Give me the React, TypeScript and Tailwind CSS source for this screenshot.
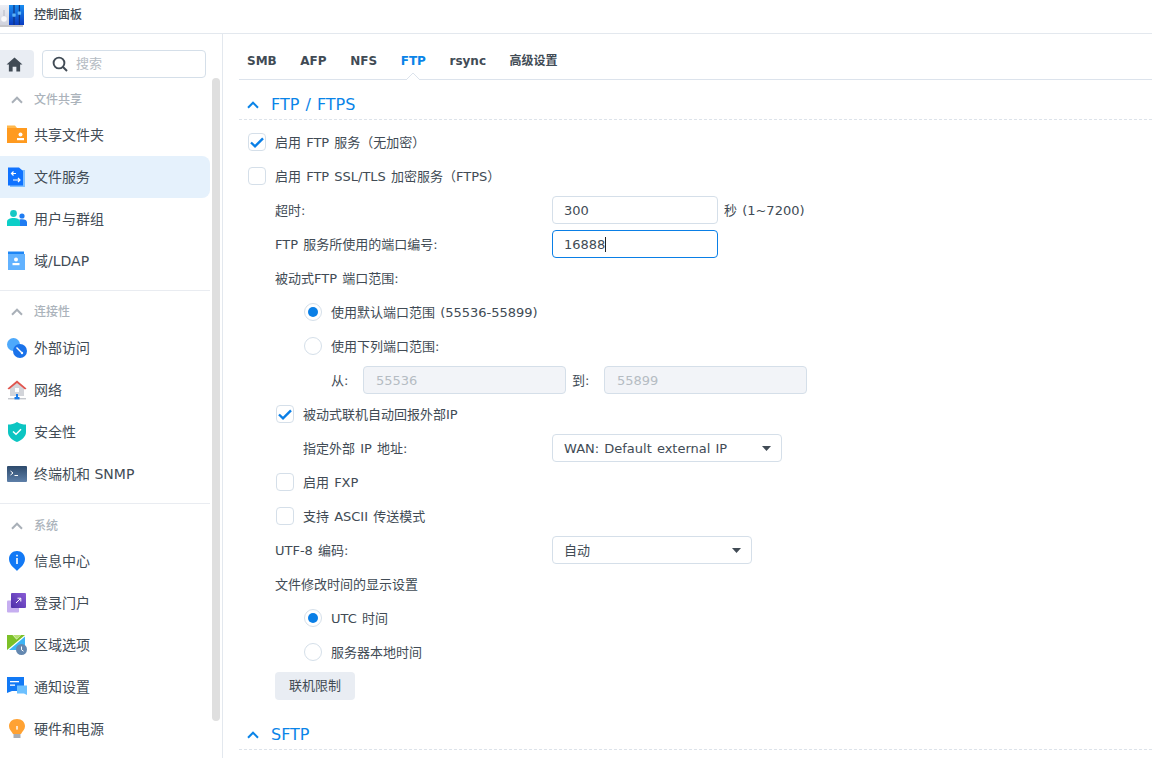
import React from "react";

const font = { fontFamily: '"DejaVu Sans","Noto Sans CJK SC",sans-serif' };

function Chevron({ className = "" }: { className?: string }) {
  return (
    <svg width="12" height="8" viewBox="0 0 12 8" fill="none" className={className}>
      <path d="M1 6.7 L6 1.7 L11 6.7" stroke="currentColor" strokeWidth="2" />
    </svg>
  );
}

function Logo() {
  return (
    <svg width="24" height="25" viewBox="0 0 24 25">
      <defs>
        <linearGradient id="lg" x1="0" y1="0" x2="0" y2="1">
          <stop offset="0" stopColor="#1a8df0" />
          <stop offset="1" stopColor="#0a3cc2" />
        </linearGradient>
        <linearGradient id="lgg" x1="0" y1="0" x2="0" y2="1">
          <stop offset="0" stopColor="#eceef4" />
          <stop offset="1" stopColor="#cfd1dc" />
        </linearGradient>
      </defs>
      <rect x="-2" y="3" width="11" height="20" fill="url(#lgg)" />
      <rect x="-2" y="23" width="25" height="2" fill="#c4c4c8" />
      <circle cx="4" cy="17" r="2.8" fill="#f8f8fa" />
      <rect x="3.5" y="8" width="1" height="6" fill="#b5b8c4" />
      <rect x="9" y="3" width="15" height="20" fill="url(#lg)" />
      <rect x="13.4" y="3" width="1.2" height="20" fill="#10337f" />
      <rect x="18.8" y="3" width="1.2" height="20" fill="#10337f" />
      <rect x="12.3" y="11.5" width="3.4" height="3.2" rx="0.6" fill="#5fb4f5" />
      <rect x="17.7" y="9.5" width="3.4" height="3.2" rx="0.6" fill="#5fb4f5" />
    </svg>
  );
}

const icons: Record<string, React.ReactNode> = {
  folder: (
    <svg width="20" height="20" viewBox="0 0 20 20">
      <path d="M0 0.5 H8 L10 3 H20 V18 H0 Z" fill="#ffb84d" />
      <path d="M0 3 H20 V18 H0 Z" fill="#ff9a1f" />
      <circle cx="13.5" cy="9.5" r="2" fill="#fff" />
      <rect x="10" y="13" width="7" height="2.2" fill="#fff" />
    </svg>
  ),
  file: (
    <svg width="20" height="20" viewBox="0 0 20 20">
      <path d="M3 3 H18 V20 H3 Z" fill="#7fc0ff" />
      <path d="M1 0.5 H12 L16 4 V18.5 H1 Z" fill="#0f72ff" />
      <path d="M9 6.5 H4.5 M6.5 4.5 L4.5 6.5 L6.5 8.5 M6 13 H13 M11 11 L13 13 L11 15" stroke="#fff" strokeWidth="1.2" fill="none" />
    </svg>
  ),
  users: (
    <svg width="20" height="20" viewBox="0 0 20 20">
      <circle cx="6.5" cy="4.5" r="3.4" fill="#18c8c4" />
      <path d="M0 17 V13 C0 10 3 9 6.5 9 C10 9 13 10 13 13 V17 Z" fill="#0ccfc8" />
      <circle cx="15" cy="7" r="2.6" fill="#1f7cf2" />
      <path d="M13 17 V13 C13 12 12.5 11 12 10.8 C13 10.3 14 10.2 15 10.2 C18 10.2 20 11.2 20 13.5 V17 Z" fill="#1f7cf2" />
    </svg>
  ),
  ldap: (
    <svg width="20" height="20" viewBox="0 0 20 20">
      <path d="M1 0.5 H17 V19 H1 Z" fill="#1e86f5" />
      <path d="M1 3 H18 V19 H1 Z" fill="#62b2ff" />
      <circle cx="9" cy="8.5" r="2" fill="#fff" />
      <rect x="5.5" y="12" width="7" height="2.2" fill="#fff" />
    </svg>
  ),
  ext: (
    <svg width="20" height="20" viewBox="0 0 20 20">
      <circle cx="6.5" cy="6.5" r="6.5" fill="#4ea9fb" />
      <circle cx="13" cy="13" r="7" fill="#1a72ea" />
      <path d="M9.5 9.5 L14.5 14.5" stroke="#fff" strokeWidth="1.4" />
      <circle cx="15" cy="15" r="1.2" fill="#fff" />
    </svg>
  ),
  net: (
    <svg width="20" height="20" viewBox="0 0 20 20">
      <path d="M3 8 H17 V16 H3 Z" fill="#d3d5da" />
      <path d="M10 2.5 L3 8.5 H17 Z" fill="#d3d5da" />
      <path d="M0.5 8.5 L10 0.5 L19.5 8.5 L18 9.5 L10 3 L2 9.5 Z" fill="#e0554e" />
      <rect x="8" y="8" width="4" height="4" fill="#fff" />
      <rect x="1" y="18" width="18" height="1.4" fill="#c5c8ce" />
      <rect x="9" y="14" width="2" height="4" fill="#1a7be8" />
      <rect x="7.5" y="17" width="5" height="2.4" fill="#1a7be8" />
    </svg>
  ),
  shield: (
    <svg width="20" height="20" viewBox="0 0 20 20">
      <path d="M10 0 C7 2 4 2.5 1 2.5 V10 C1 14.5 5 18 10 20 C15 18 19 14.5 19 10 V2.5 C16 2.5 13 2 10 0 Z" fill="#0cc5c2" />
      <path d="M6 9.5 L9 12.3 L14 7.3" stroke="#fff" strokeWidth="1.5" fill="none" />
    </svg>
  ),
  term: (
    <svg width="20" height="16" viewBox="0 0 20 16">
      <defs>
        <linearGradient id="tg" x1="0" y1="0" x2="0" y2="1">
          <stop offset="0" stopColor="#2d4a6c" />
          <stop offset="1" stopColor="#5d7fa8" />
        </linearGradient>
      </defs>
      <rect width="20" height="16" rx="1" fill="url(#tg)" />
      <path d="M3.5 5 L6 7 L3.5 9 M7.5 9.5 H11" stroke="#fff" strokeWidth="1" fill="none" />
    </svg>
  ),
  info: (
    <svg width="20" height="20" viewBox="0 0 20 20">
      <path d="M10 20 C9 18 2 14.5 2 8 C2 3.5 5.5 0 10 0 C14.5 0 18 3.5 18 8 C18 14.5 11 18 10 20 Z" fill="#1279f5" />
      <rect x="9.2" y="3.8" width="1.6" height="1.6" fill="#fff" />
      <rect x="9.2" y="7" width="1.6" height="6" fill="#fff" />
    </svg>
  ),
  portal: (
    <svg width="20" height="20" viewBox="0 0 20 20">
      <rect x="0" y="7.5" width="12" height="12" rx="1" fill="#c6aef0" />
      <defs>
        <linearGradient id="pg" x1="1" y1="0" x2="0" y2="1">
          <stop offset="0" stopColor="#8a5cd6" />
          <stop offset="1" stopColor="#4c2ea8" />
        </linearGradient>
      </defs>
      <rect x="4" y="0" width="15" height="15" rx="1" fill="url(#pg)" />
      <path d="M9 10 L13.5 5.5 M10.5 5.2 H13.8 V8.5" stroke="#fff" strokeWidth="1" fill="none" />
    </svg>
  ),
  region: (
    <svg width="20" height="20" viewBox="0 0 20 20">
      <path d="M0 0 H5.5 L9.5 4.5 L14 0 H18 L0 15 Z" fill="#7cc028" />
      <path d="M6 0 H14 L9.7 4 Z" fill="#b6e070" />
      <path d="M18 1.5 V15 H2 Z" fill="#3db4f5" />
      <circle cx="14.5" cy="14.5" r="5.5" fill="#6488b0" />
      <path d="M14.5 11.5 V14.8 L16.5 16.2" stroke="#fff" strokeWidth="1" fill="none" />
    </svg>
  ),
  notify: (
    <svg width="20" height="20" viewBox="0 0 20 20">
      <path d="M0 0 H17 V14 H5 L0 16 Z" fill="#1279f5" />
      <path d="M10 8.5 H20 V18 L17 16.5 H10 Z" fill="#6cc0ff" />
      <rect x="3" y="4" width="9" height="1.3" fill="#fff" />
      <rect x="3" y="7.5" width="5" height="1.3" fill="#fff" />
    </svg>
  ),
  bulb: (
    <svg width="20" height="20" viewBox="0 0 20 20">
      <path d="M10 0 C15 0 18 3.2 18 7.3 C18 10.5 15.5 12 14 15 H6 C4.5 12 2 10.5 2 7.3 C2 3.2 5 0 10 0 Z" fill="#ffa233" />
      <rect x="6.5" y="15" width="7" height="4" fill="#a9adb3" />
      <rect x="9.3" y="7" width="1.4" height="3.6" fill="#fff" />
    </svg>
  ),
};

function Item({ icon, label, active }: { icon: string; label: string; active?: boolean }) {
  return (
    <div className={`flex h-[42px] items-center rounded-r-lg text-[14px] text-[#414b55] ${active ? "bg-[#e5f1fc]" : ""}`}>
      <span className="ml-[7px] flex w-[27px] shrink-0 items-center">{icons[icon]}</span>
      <span>{label}</span>
    </div>
  );
}

function Group({ title }: { title: string }) {
  return (
    <div className="flex h-[30px] items-center pt-[2px] text-[12px] font-medium text-[#abb3bb]">
      <span className="ml-[11px] flex w-[23px] shrink-0 items-center text-[#a9b0b8]">
        <Chevron />
      </span>
      <span>{title}</span>
    </div>
  );
}

function Sidebar() {
  return (
    <aside className="relative flex h-full w-[223px] shrink-0 flex-col overflow-hidden border-r border-[#e3e8ee]">
      <div className="mt-4 flex items-center">
        <div className="flex h-[28px] w-[34px] items-center justify-center rounded-r-[4px] bg-[#e9edf3] pr-[6px]">
          <svg width="17" height="15" viewBox="0 0 18 16">
            <path d="M9 0.5 L17.5 8 H15 V15.5 H11 V10.5 H7 V15.5 H3 V8 H0.5 Z" fill="#414b55" />
          </svg>
        </div>
        <div className="ml-2 flex h-[28px] w-[164px] items-center rounded-[4px] border border-[#d5dfe9] text-[13px] text-[#b5bcc3]">
          <svg width="16" height="16" viewBox="0 0 16 16" fill="none" className="ml-[9px] mr-2">
            <circle cx="7" cy="7" r="5.4" stroke="#414b55" strokeWidth="1.9" />
            <path d="M11 11 L15 15" stroke="#414b55" strokeWidth="2" />
          </svg>
          搜索
        </div>
      </div>
      <div className="mt-[6px] w-[210px]">
        <Group title="文件共享" />
        <div>
          <Item icon="folder" label="共享文件夹" />
          <Item icon="file" label="文件服务" active />
          <Item icon="users" label="用户与群组" />
          <Item icon="ldap" label="域/LDAP" />
        </div>
        <div className="mt-2 border-t border-[#e9ecf1] pt-[5px]">
          <Group title="连接性" />
          <div className="pt-[1px]">
            <Item icon="ext" label="外部访问" />
            <Item icon="net" label="网络" />
            <Item icon="shield" label="安全性" />
            <Item icon="term" label="终端机和 SNMP" />
          </div>
        </div>
        <div className="mt-2 border-t border-[#e9ecf1] pt-[6px]">
          <Group title="系统" />
          <div>
            <Item icon="info" label="信息中心" />
            <Item icon="portal" label="登录门户" />
            <Item icon="region" label="区域选项" />
            <Item icon="notify" label="通知设置" />
            <Item icon="bulb" label="硬件和电源" />
          </div>
        </div>
      </div>
      <div className="absolute left-[212px] top-[44px] h-[643px] w-2 rounded bg-[#dfdfdf]" />
    </aside>
  );
}

function Tab({ label, active }: { label: string; active?: boolean }) {
  return (
    <span className={`relative flex h-full items-center pt-[8px] text-[12px] font-bold [word-spacing:0] ${active ? "text-[#0a84e8]" : "text-[#414b55]"}`}>
      {label}
      {active && (
        <svg width="14" height="7" viewBox="0 0 14 7" className="absolute -bottom-px left-1/2 -ml-[7px]">
          <path d="M0 7 L7 0 L14 7" fill="#fff" stroke="#dce3ec" />
          <rect x="1" y="6.4" width="12" height="1" fill="#fff" />
        </svg>
      )}
    </span>
  );
}

function SectionHead({ title }: { title: string }) {
  return (
    <div className="flex h-[40px] items-center border-b border-dashed border-[#dde3ea] pl-2 pt-[10px] text-[16px] text-[#0a84e8]">
      <span className="flex w-6 shrink-0 items-center">
        <Chevron />
      </span>
      <span className="pt-px">{title}</span>
    </div>
  );
}

function Row({ indent = 36, children }: { indent?: number; children: React.ReactNode }) {
  return (
    <div className="flex h-[34px] items-center" style={{ paddingLeft: indent }}>
      {children}
    </div>
  );
}

function T({ children, className = "" }: { children: React.ReactNode; className?: string }) {
  return <span className={`pt-[2px] ${className}`}>{children}</span>;
}

function Check({ checked, label, indent = 9 }: { checked?: boolean; label: string; indent?: number }) {
  return (
    <Row indent={indent}>
      <span className="mr-[9px] flex h-[18px] w-[18px] shrink-0 items-center justify-center rounded-[4px] border border-[#d5dfe9] bg-white">
        {checked && (
          <svg width="14" height="11" viewBox="0 0 14 11" fill="none">
            <path d="M1 5.5 L5 9.3 L13 1.3" stroke="#0a7fe6" strokeWidth="2.4" />
          </svg>
        )}
      </span>
      <T>{label}</T>
    </Row>
  );
}

function Radio({ checked, label }: { checked?: boolean; label: string }) {
  return (
    <Row indent={65}>
      <span className="mr-[9px] flex h-[18px] w-[18px] shrink-0 items-center justify-center rounded-full border border-[#d5dfe9] bg-white">
        {checked && <span className="h-[10px] w-[10px] rounded-full bg-[#0a7fe6]" />}
      </span>
      <T>{label}</T>
    </Row>
  );
}

function Label({ width, children }: { width: number; children: React.ReactNode }) {
  return (
    <span className="shrink-0 pt-[2px]" style={{ width }}>
      {children}
    </span>
  );
}

function Field({ value }: { value: string }) {
  return (
    <div className="flex h-[28px] w-[166px] items-center rounded-[4px] border border-[#d5dfe9] pl-[11px]">
      <T>{value}</T>
    </div>
  );
}

function Select({ value, width }: { value: string; width: string }) {
  return (
    <div className={`flex h-[28px] items-center justify-between rounded-[4px] border border-[#d5dfe9] pl-[11px] pr-[10px] ${width}`}>
      <T>{value}</T>
      <svg width="9" height="5" viewBox="0 0 9 5">
        <path d="M0 0 H9 L4.5 5 Z" fill="#414b55" />
      </svg>
    </div>
  );
}

function Disabled({ value, width }: { value: string; width: string }) {
  return (
    <div className={`flex h-[28px] items-center rounded-[4px] border border-[#d5dfe9] bg-[#f2f4f8] pl-[12px] text-[#b5bcc3] ${width}`}>
      <T>{value}</T>
    </div>
  );
}

export default function App() {
  return (
    <div className="flex h-[758px] w-[1152px] flex-col overflow-hidden bg-white" style={font}>
      <header className="flex h-[34px] shrink-0 items-center border-b border-[#e3e8ee] pb-[4px]">
        <Logo />
        <span className="ml-[10px] text-[12px] font-medium text-[#414b55]">控制面板</span>
      </header>
      <div className="flex min-h-0 flex-1">
        <Sidebar />
        <main className="min-w-0 flex-1 pl-4 text-[13px] text-[#414b55] [word-spacing:1px]">
          <nav className="flex h-[46px] items-center gap-[23.6px] border-b border-[#dce3ec] pl-2">
            <Tab label="SMB" />
            <Tab label="AFP" />
            <Tab label="NFS" />
            <Tab label="FTP" active />
            <Tab label="rsync" />
            <Tab label="高级设置" />
          </nav>
          <SectionHead title="FTP / FTPS" />
          <div className="pt-[5px]">
            <Check checked label="启用 FTP 服务（无加密）" />
            <Check label="启用 FTP SSL/TLS 加密服务（FTPS）" />
            <Row>
              <Label width={277}>超时:</Label>
              <Field value="300" />
              <T className="ml-[6px]">秒 (1~7200)</T>
            </Row>
            <Row>
              <Label width={277}>FTP 服务所使用的端口编号:</Label>
              <div className="flex h-[28px] w-[166px] items-center rounded-[4px] border border-[#0a7fe6] pl-[11px]">
                <T>16888</T>
                <span className="h-[15px] w-px bg-[#222]" />
              </div>
            </Row>
            <Row>
              <T>被动式FTP 端口范围:</T>
            </Row>
            <Radio checked label="使用默认端口范围 (55536-55899)" />
            <Radio label="使用下列端口范围:" />
            <Row indent={92}>
              <Label width={32}>从:</Label>
              <Disabled value="55536" width="w-[203px]" />
              <T className="ml-[6px] w-[32px]">到:</T>
              <Disabled value="55899" width="w-[203px]" />
            </Row>
            <Check checked label="被动式联机自动回报外部IP" indent={37} />
            <Row indent={64}>
              <Label width={249}>指定外部 IP 地址:</Label>
              <Select value="WAN: Default external IP" width="w-[230px]" />
            </Row>
            <Check label="启用 FXP" indent={37} />
            <Check label="支持 ASCII 传送模式" indent={37} />
            <Row>
              <Label width={277}>UTF-8 编码:</Label>
              <Select value="自动" width="w-[200px]" />
            </Row>
            <Row>
              <T>文件修改时间的显示设置</T>
            </Row>
            <Radio checked label="UTC 时间" />
            <Radio label="服务器本地时间" />
            <Row>
              <button className="flex h-[28px] w-[80px] items-center justify-center rounded-[4px] bg-[#e9edf3]">联机限制</button>
            </Row>
          </div>
          <div className="mt-[7px]">
            <SectionHead title="SFTP" />
          </div>
        </main>
      </div>
    </div>
  );
}
